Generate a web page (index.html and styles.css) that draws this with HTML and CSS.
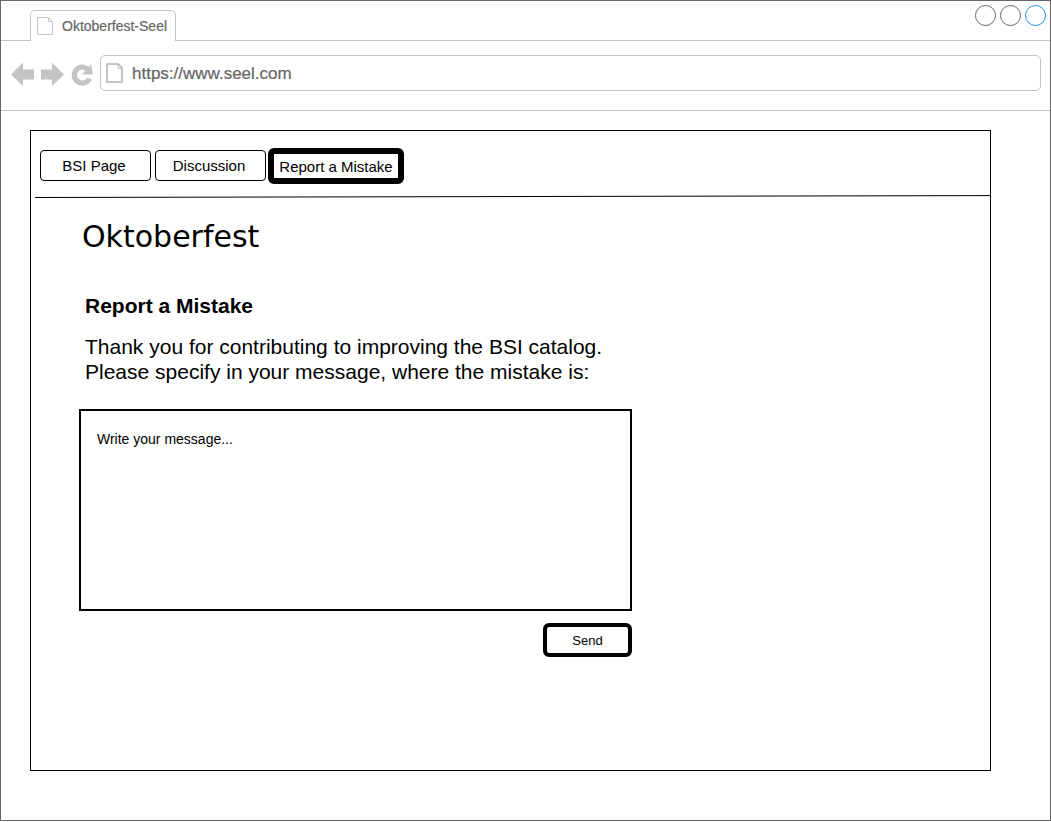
FILE: index.html
```html
<!DOCTYPE html>
<html lang="en">
<head>
<meta charset="utf-8">
<title>Oktoberfest-Seel</title>
<link rel="stylesheet" href="styles.css">
</head>
<body>
<div class="browser">
  <header class="tabstrip">
    <div class="tab">
      <svg class="tab-icon" width="16" height="20" viewBox="0 0 16 20" fill="none" stroke="#c4c4c4"><path d="M.5 1.500H11.500L15.500 5.500V18.500H.5ZM11.500 1.500V5.500H15.500"/></svg>
      <span>Oktoberfest-Seel</span>
    </div>
    <div class="controls">
      <svg width="72" height="22" viewBox="0 0 72 22" fill="none" stroke="#666"><circle cx="11.500" cy="11.500" r="10"/><circle cx="36.500" cy="11.500" r="10"/><circle cx="61.500" cy="11.500" r="10" stroke="#1d8ff2"/></svg>
    </div>
  </header>
  <div class="toolbar">
    <nav class="nav" aria-label="Browser navigation">
      <button class="nav-button" aria-label="Back"><svg width="23" height="24" viewBox="0 0 23 24" fill="#c4c4c4"><path d="M0 12.500 12 .5V7.500H23V17.500H12V24Z"/></svg></button>
      <button class="nav-button" aria-label="Forward"><svg width="23" height="24" viewBox="0 0 23 24" fill="#c4c4c4"><path d="M23 12.500 11 .5V7.500H0V17.500H11V24Z"/></svg></button>
      <button class="nav-button" aria-label="Reload"><svg width="22" height="24" viewBox="0 0 22 24"><path d="M16.500 7A8 8 0 1 0 18.600 16.500" fill="none" stroke="#c4c4c4" stroke-width="5.200"/><path d="M20 2 22 12.500H11L14 9V4.500L18 5Z" fill="#c4c4c4"/></svg></button>
    </nav>
    <div class="address">
      <svg class="page-icon" width="18" height="20" viewBox="0 0 18 20" fill="none" stroke="#c4c4c4" stroke-width="2"><path d="M1 1H12L16 5V19H1Z"/><path d="M12 1V5.500H16" stroke-width="1"/></svg>
      <input class="url" type="text" value="https://www.seel.com" aria-label="Address">
    </div>
  </div>
  <main class="panel">
    <nav class="menu" aria-label="Page sections">
      <button class="menu-item">BSI Page</button>
      <button class="menu-item">Discussion</button>
      <button class="menu-item current" aria-current="page">Report a Mistake</button>
    </nav>
    <svg class="rule" height="3" viewBox="0 0 956 3" preserveAspectRatio="none" aria-hidden="true"><path d="M0 2.500 956 .6" stroke="#000" fill="none"/></svg>
    <h1 class="title">Oktoberfest</h1>
    <form class="report">
      <h2 class="subtitle">Report a Mistake</h2>
      <label class="intro" for="message">Thank you for contributing to improving the BSI catalog.<br>Please specify in your message, where the mistake is:</label>
      <textarea class="message" id="message" placeholder="Write your message..."></textarea>
      <button class="send" type="button">Send</button>
    </form>
  </main>
</div>
</body>
</html>
```
FILE: styles.css
```css
* { box-sizing: border-box; }
body {
  margin: 0;
  background: #fff;
  color: #000;
  font-family: "Liberation Sans", Arial, sans-serif;
}
button, input, textarea { font: inherit; color: inherit; }
svg { display: block; flex: none; }
.browser {
  display: flex;
  flex-direction: column;
  min-height: calc(100vh - 1px);
  border: 1px solid #666;
}
.tabstrip {
  display: flex;
  justify-content: space-between;
  align-items: flex-start;
  height: 40px;
  padding: 9px 4px 0 29px;
  border-bottom: 1px solid #c4c4c4;
}
.tab {
  display: flex;
  align-items: center;
  gap: 9px;
  height: 31px;
  padding: 0 8px 0 6px;
  border: 1px solid #c4c4c4;
  border-bottom: 0;
  border-radius: 5px 5px 0 0;
  background: #fff;
  color: #666;
  font-size: 14px;
  -webkit-text-stroke: 0.2px #666;
}
.controls { margin-top: -6px; }
.toolbar {
  display: flex;
  align-items: flex-start;
  gap: 7px;
  padding: 14px 9px 19px 10px;
  border-bottom: 1px solid #c4c4c4;
}
.nav { display: flex; gap: 7px; padding-top: 7px; }
.nav-button { padding: 0; border: 0; background: none; }
.address {
  display: flex;
  flex: 1;
  align-items: center;
  gap: 8px;
  height: 36px;
  padding: 0 5px;
  border: 1px solid #c4c4c4;
  border-radius: 5px;
}
.url {
  flex: 1;
  min-width: 0;
  padding: 1px 0 0;
  border: 0;
  outline: 0;
  background: none;
  color: #666;
  font-size: 17px;
  -webkit-text-stroke: 0.2px #666;
}
.panel {
  flex: 1;
  margin: 19px 59px 49px 29px;
  border: 1px solid #000;
}
.menu {
  display: flex;
  align-items: flex-start;
  padding: 17px 9px 11px;
}
.menu-item {
  width: 111px;
  height: 31px;
  margin: 2px 4px 0 0;
  padding: 0 3px 1px 0;
  border: 1px solid #000;
  border-radius: 4px;
  background: #fff;
  font-size: 15px;
}
.menu-item.current {
  width: 136px;
  height: 36px;
  margin: 0 0 0 -2px;
  padding: 0;
  border-width: 6px;
  border-radius: 6px;
}
.rule { width: calc(100% - 4px); margin-left: 4px; }
.title {
  margin: 19px 0 0 51px;
  font: 400 30px/40px "DejaVu Sans", Verdana, sans-serif;
}
.report {
  display: flex;
  flex-direction: column;
  width: 553px;
  max-width: 90%;
  margin: 36px 0 0 48px;
}
.subtitle {
  margin: 0 6px 16px;
  font-size: 21px;
  line-height: 25px;
}
.intro {
  margin: 0 6px 25px;
  font-size: 21px;
  line-height: 25px;
}
.message {
  height: 202px;
  padding: 20px 16px;
  border: 2px solid #000;
  border-radius: 0;
  outline: 0;
  resize: none;
  font-size: 14px;
}
.message::placeholder { color: #000; opacity: 1; }
.send {
  align-self: flex-end;
  width: 89px;
  height: 34px;
  margin-top: 12px;
  padding: 0;
  border: 4px solid #000;
  border-radius: 6px;
  background: #fff;
  font-size: 13px;
}
```
